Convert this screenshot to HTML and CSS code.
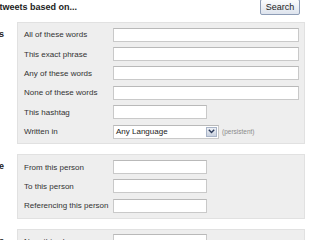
FILE: index.html
```html
<!DOCTYPE html>
<html lang="en">

<head>
    <meta charset="UTF-8">
    <meta name="viewport" content="width=device-width, initial-scale=1.0">
    <title>Advanced Search</title>
    <link rel="stylesheet" href="styles.css">
</head>

<body>
    <div class="page">

        <div class="header">
            <h2 class="title">Find tweets based on...</h2>
            <button class="search-btn">Search</button>
        </div>

        <div class="section">
            <div class="section-label">Words</div>
            <div class="box">
                <div class="row">
                    <label for="allWords">All of these words</label>
                    <input type="text" id="allWords" class="field" />
                </div>
                <div class="row">
                    <label for="phrase">This exact phrase</label>
                    <input type="text" id="phrase" class="field" />
                </div>
                <div class="row">
                    <label for="anyWords">Any of these words</label>
                    <input type="text" id="anyWords" class="field" />
                </div>
                <div class="row">
                    <label for="noneWords">None of these words</label>
                    <input type="text" id="noneWords" class="field" />
                </div>
                <div class="row">
                    <label for="hashtag">This hashtag</label>
                    <input type="text" id="hashtag" class="field short" />
                </div>
                <div class="row">
                    <label>Written in</label>
                    <div class="select">
                        <span class="select-text">Any Language</span>
                        <span class="select-arrow">
                            <svg width="7" height="5" viewBox="0 0 7 5">
                                <path d="M0.8 0.8 L3.5 3.6 L6.2 0.8" fill="none" stroke="#2b3a5a" stroke-width="1.4" />
                            </svg>
                        </span>
                    </div>
                    <span class="note">(persistent)</span>
                </div>
            </div>
        </div>

        <div class="section">
            <div class="section-label">People</div>
            <div class="box">
                <div class="row">
                    <label for="fromPerson">From this person</label>
                    <input type="text" id="fromPerson" class="field short" />
                </div>
                <div class="row">
                    <label for="toPerson">To this person</label>
                    <input type="text" id="toPerson" class="field short" />
                </div>
                <div class="row">
                    <label for="refPerson">Referencing this person</label>
                    <input type="text" id="refPerson" class="field short" />
                </div>
            </div>
        </div>

        <div class="section">
            <div class="section-label">Places</div>
            <div class="box">
                <div class="row">
                    <label for="near">Near this place</label>
                    <input type="text" id="near" class="field short" />
                </div>
                <div class="row">
                    <label for="within">Within this distance</label>
                    <input type="text" id="within" class="field short" />
                </div>
            </div>
        </div>

    </div>
</body>

</html>
```

FILE: styles.css
```css
body {
    margin: 0;
    font-family: "Liberation Sans", Arial, sans-serif;
    font-size: 8px;
    color: #333;
    background-color: #fff;
    overflow: hidden;
}

.page {
    margin-left: -56px;
    width: 361px;
}

.header {
    display: flex;
    justify-content: space-between;
    align-items: flex-start;
    height: 15px;
    margin-bottom: 7px;
    padding-left: 34px;
    padding-right: 5px;
}

.title {
    margin: 0;
    padding-top: 1px;
    font-size: 9px;
    line-height: 12px;
    font-weight: bold;
    color: #222;
}

.search-btn {
    width: 40px;
    height: 16px;
    margin-top: -1px;
    padding: 0;
    font-family: "Liberation Sans", Arial, sans-serif;
    font-size: 9px;
    color: #222;
    border: 1px solid #8e9db6;
    border-radius: 2px;
    background: linear-gradient(#fcfdfe, #dde3ed);
}

.section {
    display: flex;
    margin-bottom: 10px;
}

.section-label {
    width: 60px;
    margin-right: 13px;
    padding-top: 3px;
    text-align: right;
    font-size: 9px;
    line-height: 19.4px;
    font-weight: bold;
    color: #222;
}

.box {
    width: 288px;
    box-sizing: border-box;
    padding: 2px 5px 2px 6px;
    background-color: #eeeeee;
    border: 1px solid #e1e1e1;
}

.row {
    display: flex;
    align-items: center;
    height: 19.4px;
}

.row label {
    width: 89px;
    flex-shrink: 0;
    color: #333;
}

.field {
    width: 186px;
    height: 14px;
    box-sizing: border-box;
    margin: 0;
    padding: 0 2px;
    font-family: inherit;
    font-size: 8px;
    background-color: #fff;
    border: 1px solid #c9c9c9;
    border-top-color: #b9b9b9;
    border-radius: 0;
}

.field.short {
    width: 94px;
}

.select {
    display: flex;
    align-items: center;
    width: 106px;
    height: 14px;
    box-sizing: border-box;
    padding: 0 1px 0 2px;
    background-color: #fff;
    border: 1px solid #c9c9c9;
    border-top-color: #b9b9b9;
}

.select-text {
    flex: 1;
    color: #222;
    font-size: 8px;
}

.select-arrow {
    display: flex;
    align-items: center;
    justify-content: center;
    width: 11px;
    height: 10px;
    box-sizing: border-box;
    border: 1px solid #a9b4c7;
    background: linear-gradient(#eef1f6, #c9d1df);
}

.note {
    margin-left: 3px;
    font-size: 6.5px;
    color: #8a8a8a;
}
```
